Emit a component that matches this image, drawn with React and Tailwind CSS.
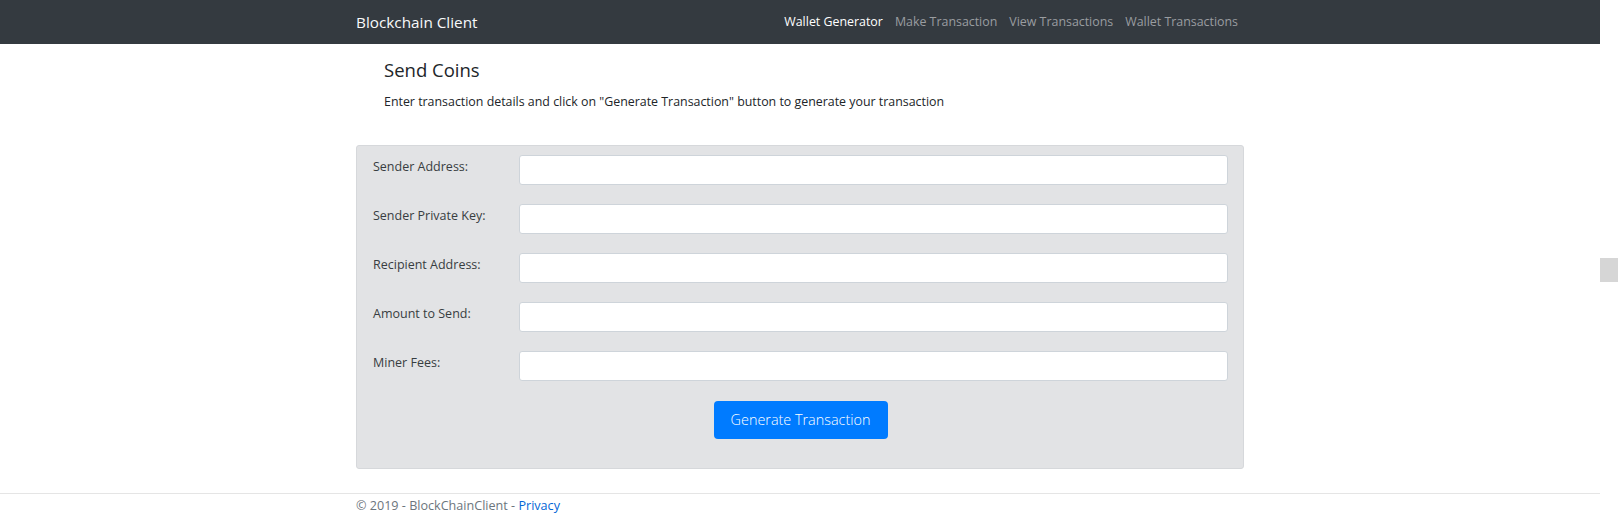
import React from "react";

const fields = [
  "Sender Address:",
  "Sender Private Key:",
  "Recipient Address:",
  "Amount to Send:",
  "Miner Fees:",
];

export default function App() {
  return (
    <div
      className="flex w-[1618px] h-[530px] bg-white overflow-hidden"
      style={{ fontFamily: '"Open Sans", "Noto Sans", sans-serif' }}
    >
      <div className="w-[1600px] flex flex-col">
        <nav className="h-[44px] bg-[#343a40] shrink-0">
          <div className="w-[888px] mx-auto h-full flex items-center justify-between">
            <span className="text-[15.3px] text-[#f8f9fa] leading-[20px]">Blockchain Client</span>
            <div className="flex items-center text-[12.4px] leading-[18px]">
              <span className="px-[6px] text-white">Wallet Generator</span>
              <span className="px-[6px] text-[#9a9da0]">Make Transaction</span>
              <span className="px-[6px] text-[#9a9da0]">View Transactions</span>
              <span className="px-[6px] text-[#9a9da0]">Wallet Transactions</span>
            </div>
          </div>
        </nav>

        <main className="w-[888px] mx-auto">
          <div className="px-[28px] pt-[14px]">
            <h1 className="text-[18.5px] leading-[24px] font-medium text-[#212529]">Send Coins</h1>
            <p className="mt-[11px] text-[12.4px] leading-[18px] text-[#212529]">
              Enter transaction details and click on "Generate Transaction" button to generate your transaction
            </p>
          </div>

          <div className="mt-[34px] h-[324px] bg-[#e2e3e5] border border-[#d6d8db] rounded-[3px] pt-[9px] pl-[16px] pr-[15px]">
            <div className="flex flex-col gap-[19px]">
              {fields.map((f) => (
                <div key={f} className="flex">
                  <label className="w-[146px] pt-[3px] text-[12.5px] leading-[18px] text-[#383d41]">{f}</label>
                  <div className="flex-1 h-[30px] bg-white border border-[#ced4da] rounded-[3px]" />
                </div>
              ))}
            </div>
            <div className="flex justify-center mt-[20px]">
              <button className="w-[174px] h-[38px] bg-[#007bff] text-white text-[14.4px] font-light rounded-[4px]">
                Generate Transaction
              </button>
            </div>
          </div>
        </main>

        <footer className="mt-[24px] border-t border-[#e5e5e5]">
          <div className="w-[888px] mx-auto pt-[3px] text-[12.6px] leading-[18px] text-[#6c757d]">
            © 2019 - BlockChainClient - <span className="text-[#0366d6]">Privacy</span>
          </div>
        </footer>
      </div>
      <div className="w-[18px] pt-[258px]">
        <div className="h-[24px] bg-[#d6d6d6]" />
      </div>
    </div>
  );
}
